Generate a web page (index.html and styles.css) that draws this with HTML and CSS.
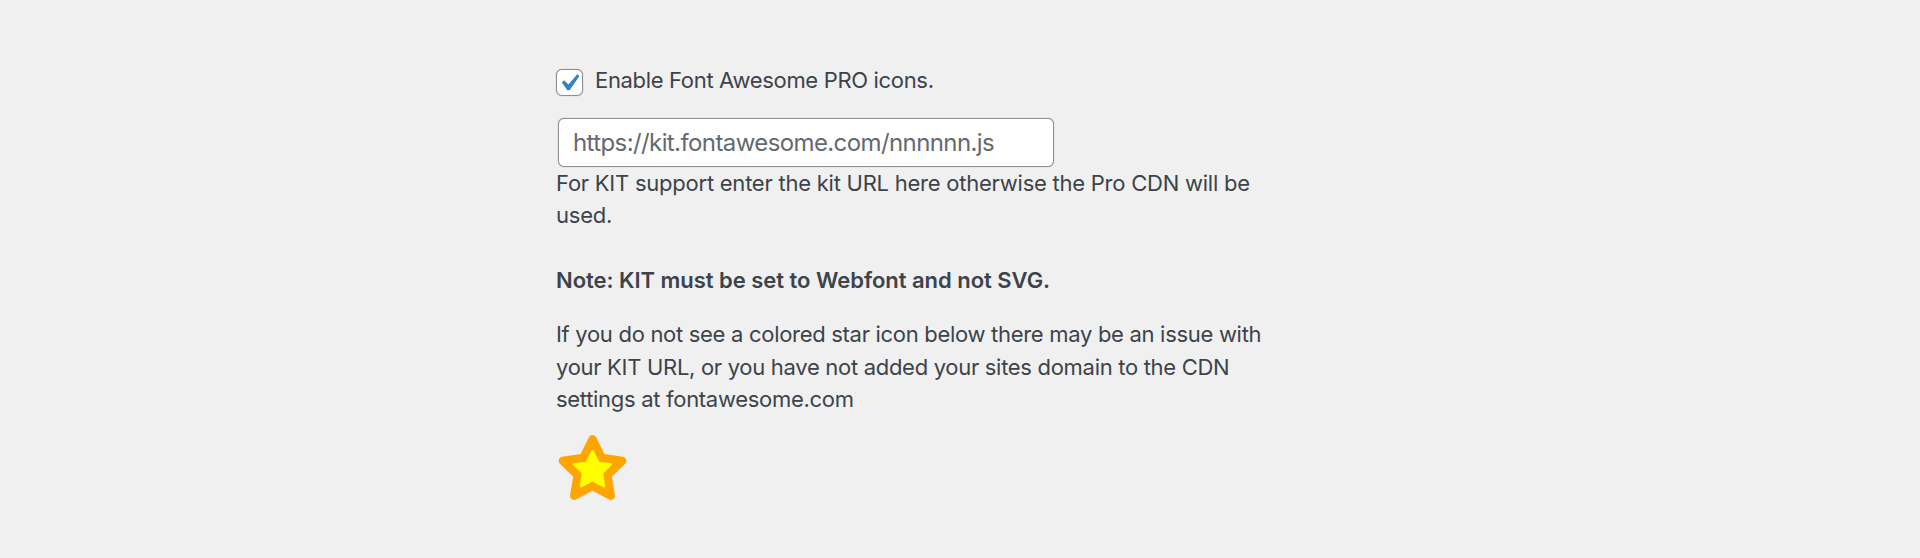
FILE: index.html
```html
<!DOCTYPE html>
<html lang="en">
<head>
<meta charset="utf-8">
<title>Font Awesome settings</title>
<link rel="stylesheet" href="styles.css">
</head>
<body>
<main class="settings">
  <label class="option">
    <span class="checkbox"><svg class="check" viewBox="0 0 20 20"><path d="M14.83 4.89l1.34.94-5.81 8.38H9.02L5.78 9.67l1.34-1.25 2.57 2.4z"/></svg></span>
    <span>Enable Font Awesome PRO icons.</span>
  </label>
  <input class="kit-url" type="text" placeholder="https://kit.fontawesome.com/nnnnnn.js">
  <p class="help">For KIT support enter the kit URL here otherwise the Pro CDN will be<br>used.</p>
  <p class="note">Note: KIT must be set to Webfont and not SVG.</p>
  <p class="info">If you do not see a colored star icon below there may be an issue with<br>your KIT URL, or you have not added your sites domain to the CDN<br>settings at fontawesome.com</p>
  <svg class="star" viewBox="0 0 576 512"><path class="star-outer" d="M528.1 171.500L382 150.200 316.700 17.800c-11.700-23.600-45.600-23.900-57.400 0L194 150.200 47.900 171.500c-26.200 3.800-36.700 36.100-17.700 54.600l105.700 103-25 145.500c-4.500 26.300 23.200 46 46.400 33.700L288 439.600l130.700 68.700c23.200 12.200 50.900-7.400 46.400-33.700l-25-145.500 105.700-103c19-18.500 8.500-50.800-17.700-54.600z"/><path class="star-inner" d="M288 129l49 94 94 8-70 69 17 103-90-48-90 48 17-103-70-69 94-8z"/></svg>
</main>
</body>
</html>
```
FILE: styles.css
```css
body {
  margin: 0;
  background: #f0f0f0;
  color: #3c434a;
  font: 400 22px/32.4px Inter, sans-serif;
  letter-spacing: -0.3px;
}
.settings {
  width: 720px;
  padding: 64px 0 0 556px;
}
.option {
  display: flex;
  align-items: center;
  gap: 12px;
  letter-spacing: -0.33px;
}
.checkbox {
  box-sizing: border-box;
  width: 27px;
  height: 27px;
  margin-top: 5px;
  border: 1px solid #8c8f94;
  border-radius: 6px;
  background: #fff;
  box-shadow: 0 0 1px #8c8f94;
}
.check {
  display: block;
  width: 34px;
  height: 34px;
  margin: -4px 0 0 -5px;
  fill: #3582c4;
}
.kit-url {
  display: block;
  box-sizing: border-box;
  width: 496px;
  height: 49px;
  margin: 21.5px 0 0 2px;
  padding: 0 14px;
  border: 1px solid #8c8f94;
  border-radius: 6px;
  background: #fff;
  box-shadow: 0 0 1px #8c8f94;
  font: 400 24px Inter, sans-serif;
  letter-spacing: -0.6px;
}
.kit-url::placeholder { color: #646970; }
p { margin: 0; white-space: nowrap; }
.help { letter-spacing: -0.24px; }
.note { margin-top: 32.4px; font-weight: 600; letter-spacing: -0.03px; }
.info { margin-top: 21.6px; }
.star {
  display: block;
  width: 73px;
  height: 65px;
  margin-top: 20px;
}
.star-outer { fill: orange; }
.star-inner {
  fill: yellow;
  stroke: yellow;
  stroke-width: 22;
  stroke-linejoin: round;
}
```
